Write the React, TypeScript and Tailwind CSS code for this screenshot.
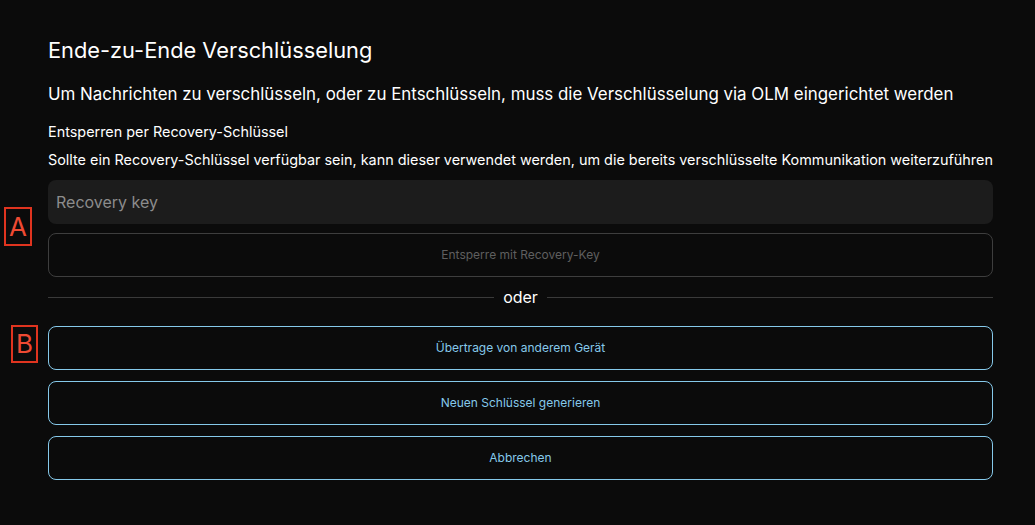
const blue = 'border-[#86c9ea] text-[#86c9ea]';

const Marker = ({ label, className }: { label: string; className: string }) => (
  <div
    className={`absolute flex items-center justify-center border-2 border-[#e0341f] text-[26px] leading-none text-[#ef4a33] ${className}`}
  >
    {label}
  </div>
);

const App = () => {
  return (
    <div
      className="relative min-h-[525px] w-full bg-[#0b0b0b] text-white"
      style={{ fontFamily: 'Inter, "Noto Sans", sans-serif' }}
    >
      <Marker label="A" className="left-[4px] top-[207px] h-[39px] w-[28px]" />
      <Marker label="B" className="left-[11px] top-[325px] h-[38px] w-[27px]" />

      <div className="ml-[48px] flex w-[945px] flex-col pt-[36px]">
        <h1 className="text-[21.8px] leading-[28px]">Ende-zu-Ende Verschlüsselung</h1>
        <p className="mt-[18px] text-[16.9px] leading-[24px]">
          Um Nachrichten zu verschlüsseln, oder zu Entschlüsseln, muss die Verschlüsselung via OLM eingerichtet werden
        </p>

        <p className="mt-[16px] text-[14.4px] leading-[20px]">Entsperren per Recovery-Schlüssel</p>
        <p className="mt-[8px] text-[14.4px] leading-[20px]">
          Sollte ein Recovery-Schlüssel verfügbar sein, kann dieser verwendet werden, um die bereits verschlüsselte Kommunikation weiterzuführen
        </p>

        {/* recovery key */}
        <input
          placeholder="Recovery key"
          className="mt-[10px] h-[44px] w-full rounded-lg bg-[#1c1c1c] px-[8px] text-[16px] text-white outline-none placeholder:text-[#8c8c8c]"
        />
        <button className="mt-[9px] h-[44px] w-full rounded-lg border border-[#3e3e3e] text-[12px] text-[#5f5f5f]">
          Entsperre mit Recovery-Key
        </button>

        {/* oder */}
        <div className="mt-[9px] flex h-[22px] items-center gap-[9px]">
          <div className="h-px flex-1 bg-[#3a3a3a]" />
          <span className="text-[16px]">oder</span>
          <div className="h-px flex-1 bg-[#3a3a3a]" />
        </div>

        <div className="mt-[18px] flex flex-col gap-[11px]">
          <button className={`h-[44px] w-full rounded-lg border text-[12px] ${blue}`}>Übertrage von anderem Gerät</button>
          <button className={`h-[44px] w-full rounded-lg border text-[12px] ${blue}`}>Neuen Schlüssel generieren</button>
          <button className={`h-[44px] w-full rounded-lg border text-[12px] ${blue}`}>Abbrechen</button>
        </div>
      </div>
    </div>
  );
};

export default App;
